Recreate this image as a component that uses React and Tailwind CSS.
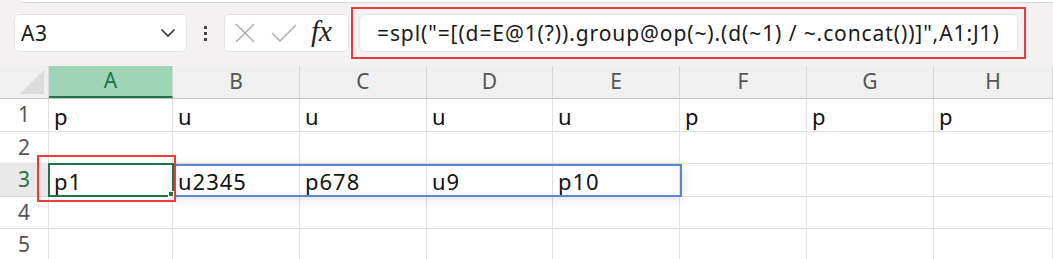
import React from "react";

const cols = [
  { l: "A", w: 124 },
  { l: "B", w: 127 },
  { l: "C", w: 127 },
  { l: "D", w: 126 },
  { l: "E", w: 127 },
  { l: "F", w: 127 },
  { l: "G", w: 127 },
  { l: "H", w: 119 },
];

const rows = [
  ["p", "u", "u", "u", "u", "p", "p", "p"],
  ["", "", "", "", "", "", "", ""],
  ["p1", "u2345", "p678", "u9", "p10", "", "", ""],
  ["", "", "", "", "", "", "", ""],
  ["", "", "", "", "", "", "", ""],
];

const font = { fontFamily: '"Noto Sans", "Open Sans", sans-serif' };

export default function App() {
  return (
    <div
      className="relative w-[1053px] h-[259px] overflow-hidden bg-white text-[#222]"
      style={font}
    >
      {/* toolbar */}
      <div className="relative h-[66px] bg-[#f3f1f1] flex items-center">
        <div className="absolute left-[20px] right-0 top-0 h-[2px] bg-white rounded-bl-[3px] shadow-[0_1px_1px_rgba(0,0,0,0.12)]" />
        <div className="ml-[14px] w-[173px] h-[38px] bg-white rounded-[5px] border border-[#e6e3e3] flex items-center pl-[6px] pr-[10px]">
          <span className="text-[21px] leading-none text-[#1a1a1a] tracking-[0.5px]">A3</span>
          <svg className="ml-auto" width="16" height="10" viewBox="0 0 16 10">
            <path d="M1.5 1.5 L8 8 L14.5 1.5" fill="none" stroke="#333" strokeWidth="1.6" />
          </svg>
        </div>
        <div className="w-[37px] flex flex-col items-center gap-[3px]">
          <div className="w-[3px] h-[3px] bg-[#444]" />
          <div className="w-[3px] h-[3px] bg-[#444]" />
          <div className="w-[3px] h-[3px] bg-[#444]" />
        </div>
        <div className="w-[125px] h-[38px] bg-white rounded-[5px] border border-[#e6e3e3] flex items-center pl-[9px]">
          <svg width="22" height="22" viewBox="0 0 22 22">
            <path d="M2 2 L20 20 M20 2 L2 20" stroke="#a8a8a8" strokeWidth="1.4" fill="none" />
          </svg>
          <svg className="ml-[15px]" width="26" height="20" viewBox="0 0 26 20">
            <path d="M1 10 L9 18 L25 2" stroke="#a8a8a8" strokeWidth="1.4" fill="none" />
          </svg>
          <span
            className="ml-[14px] text-[29px] leading-none italic text-[#222] -mt-[3px]"
            style={{ fontFamily: '"Liberation Serif", "DejaVu Serif", serif' }}
          >
            fx
          </span>
        </div>
        <div className="ml-[2px] w-[675px] h-[52px] border-[2px] border-[#ee3a3a] flex items-center pl-[6px] pr-[6px]">
          <div className="w-full h-[38px] bg-white rounded-[5px] border border-[#e6e3e3] flex items-center pl-[17px]">
            <span className="text-[21px] tracking-[0.9px] leading-none text-[#1a1a1a] whitespace-nowrap">
              =spl("=[(d=E@1(?)).group@op(~).(d(~1) / ~.concat())]",A1:J1)
            </span>
          </div>
        </div>
      </div>

      {/* header row */}
      <div className="flex h-[33px] bg-[#f0f0f0] border-b border-[#c4c4c4]">
        <div className="relative w-[49px] h-full border-r border-[#d8d8d8]">
          <div className="absolute right-[4px] bottom-[4px] w-0 h-0 border-l-[24px] border-l-transparent border-b-[24px] border-b-[#dcdcdc]" />
        </div>
        {cols.map((c, i) => (
          <div
            key={c.l}
            style={{ width: c.w }}
            className={
              i === 0
                ? "h-full flex items-center justify-center text-[21px] text-[#217346] bg-[#9fd5b7] border-b-[2px] border-[#217346] -mb-px border-r border-r-[#d8d8d8]"
                : "h-full flex items-center justify-center text-[21px] text-[#555] border-r border-[#d8d8d8]"
            }
          >
            {c.l}
          </div>
        ))}
      </div>

      {/* rows */}
      {rows.map((r, ri) => (
        <div key={ri} className="flex h-[32.5px]">
          <div
            className={
              ri === 2
                ? "w-[49px] h-full flex items-center justify-center text-[21px] text-[#217346] bg-[#e9e9e9] border-r border-b border-[#d8d8d8]"
                : "w-[49px] h-full flex items-center justify-center text-[21px] text-[#555] bg-white border-r border-b border-[#e1e1e1]"
            }
          >
            {ri + 1}
          </div>
          {r.map((v, ci) => (
            <div
              key={ci}
              style={{ width: cols[ci].w }}
              className="h-full flex items-center pl-[5px] pt-[2px] text-[22px] tracking-[1px] leading-none text-[#111] border-r border-b border-[#e1e1e1] whitespace-nowrap"
            >
              {v}
            </div>
          ))}
        </div>
      ))}

      {/* range highlight (blue) */}
      <div className="absolute left-[172px] top-[164px] w-[510px] h-[33px] border-[2px] border-[#5b86d6] shadow-[0_2px_10px_rgba(0,0,0,0.12)]" />
      {/* active cell (green) */}
      <div className="absolute left-[48px] top-[163px] w-[126px] h-[34px] border-[2px] border-[#217346]" />
      <div className="absolute left-[168px] top-[191px] w-[6px] h-[6px] bg-[#217346] border border-white" />
      {/* red annotation box */}
      <div className="absolute left-[37px] top-[155px] w-[139px] h-[47px] border-[2px] border-[#ee3a3a]" />
    </div>
  );
}
